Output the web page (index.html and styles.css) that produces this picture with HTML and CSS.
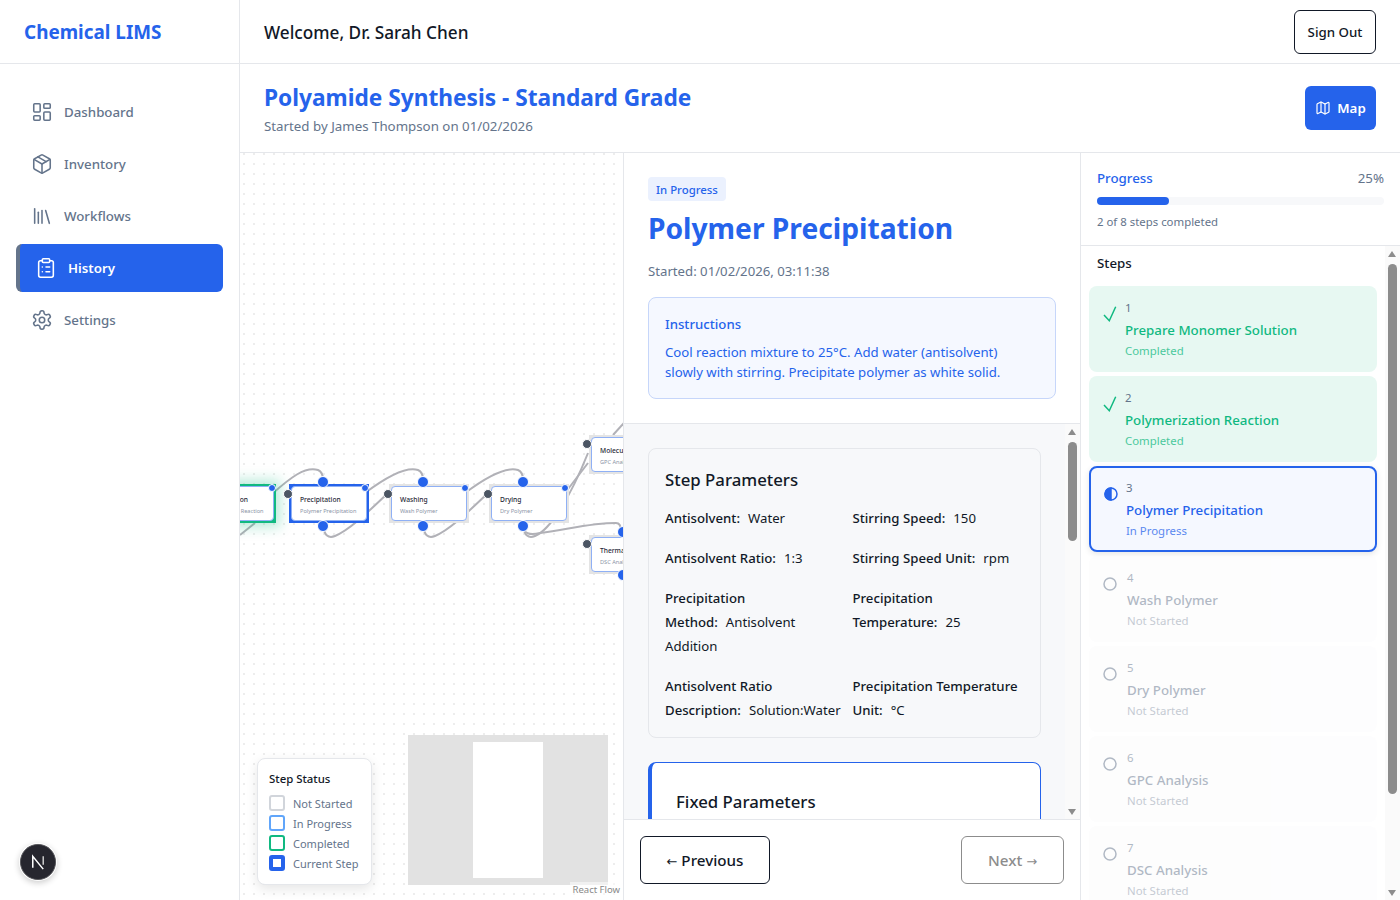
FILE: index.html
```html
<!DOCTYPE html>
<html lang="en">
<head>
    <meta charset="UTF-8">
    <title>Chemical LIMS</title>
    <link rel="stylesheet" href="styles.css">
</head>
<body>
    <div class="app">
        <aside class="sidebar">
            <div class="brand">Chemical LIMS</div>
            <nav class="nav">
                <a class="nav-item">
                    <svg class="nav-icon" viewBox="0 0 24 24"><rect x="3" y="3" width="7" height="9" rx="1"/><rect x="14" y="3" width="7" height="5" rx="1"/><rect x="14" y="12" width="7" height="9" rx="1"/><rect x="3" y="16" width="7" height="5" rx="1"/></svg>
                    Dashboard
                </a>
                <a class="nav-item">
                    <svg class="nav-icon" viewBox="0 0 24 24"><path d="M21 8a2 2 0 0 0-1-1.73l-7-4a2 2 0 0 0-2 0l-7 4A2 2 0 0 0 3 8v8a2 2 0 0 0 1 1.73l7 4a2 2 0 0 0 2 0l7-4A2 2 0 0 0 21 16Z"/><path d="m3.3 7 8.7 5 8.7-5"/><path d="M12 22V12"/><path d="m7.5 4.27 9 5.15"/></svg>
                    Inventory
                </a>
                <a class="nav-item">
                    <svg class="nav-icon" viewBox="0 0 24 24"><path d="m16 6 4 14"/><path d="M12 6v14"/><path d="M8 8v12"/><path d="M4 4v16"/></svg>
                    Workflows
                </a>
                <a class="nav-item active">
                    <svg class="nav-icon" viewBox="0 0 24 24"><rect x="8" y="2" width="8" height="4" rx="1"/><path d="M16 4h2a2 2 0 0 1 2 2v14a2 2 0 0 1-2 2H6a2 2 0 0 1-2-2V6a2 2 0 0 1 2-2h2"/><path d="M12 11h4"/><path d="M12 16h4"/><path d="M8 11h.01"/><path d="M8 16h.01"/></svg>
                    History
                </a>
                <a class="nav-item">
                    <svg class="nav-icon" viewBox="0 0 24 24"><path d="M12.22 2h-.44a2 2 0 0 0-2 2v.18a2 2 0 0 1-1 1.73l-.43.25a2 2 0 0 1-2 0l-.15-.08a2 2 0 0 0-2.73.73l-.22.38a2 2 0 0 0 .73 2.73l.15.1a2 2 0 0 1 1 1.72v.51a2 2 0 0 1-1 1.74l-.15.09a2 2 0 0 0-.73 2.73l.22.38a2 2 0 0 0 2.73.73l.15-.08a2 2 0 0 1 2 0l.43.25a2 2 0 0 1 1 1.73V20a2 2 0 0 0 2 2h.44a2 2 0 0 0 2-2v-.18a2 2 0 0 1 1-1.73l.43-.25a2 2 0 0 1 2 0l.15.08a2 2 0 0 0 2.73-.73l.22-.39a2 2 0 0 0-.73-2.73l-.15-.08a2 2 0 0 1-1-1.74v-.5a2 2 0 0 1 1-1.74l.15-.09a2 2 0 0 0 .73-2.73l-.22-.38a2 2 0 0 0-2.73-.73l-.15.08a2 2 0 0 1-2 0l-.43-.25a2 2 0 0 1-1-1.73V4a2 2 0 0 0-2-2z"/><circle cx="12" cy="12" r="3"/></svg>
                    Settings
                </a>
            </nav>
            <div class="dev-badge">
                <svg viewBox="0 0 40 40" width="38" height="38"><circle cx="20" cy="20" r="18.5" fill="#26262e" stroke="#55555a"/><path d="M14.5 26V14l11 13.5" fill="none" stroke="#fff" stroke-width="1.6"/><path d="M25.5 14v9" fill="none" stroke="#ccc" stroke-width="1.6"/></svg>
            </div>
        </aside>

        <div class="main">
            <header class="topbar">
                <div class="welcome">Welcome, Dr. Sarah Chen</div>
                <button class="btn-outline">Sign Out</button>
            </header>

            <div class="run-header">
                <div class="run-title">
                    <h1>Polyamide Synthesis - Standard Grade</h1>
                    <p>Started by James Thompson on 01/02/2026</p>
                </div>
                <button class="btn-map">
                    <svg viewBox="0 0 24 24"><path d="M14.106 5.553a2 2 0 0 0 1.788 0l3.659-1.83A1 1 0 0 1 21 4.619v12.764a1 1 0 0 1-.553.894l-4.553 2.277a2 2 0 0 1-1.788 0l-4.212-2.106a2 2 0 0 0-1.788 0l-3.659 1.83A1 1 0 0 1 3 19.381V6.618a1 1 0 0 1 .553-.894l4.553-2.277a2 2 0 0 1 1.788 0z"/><path d="M15 5.764v15"/><path d="M9 3.236v15"/></svg>
                    Map
                </button>
            </div>

            <div class="workspace">
                <section class="flow">
                    <svg class="edges" viewBox="0 0 384 747">
                        <path d="M32 341 C50 325 65 313 78 317 Q83 319 83 327"/>
                        <path d="M83 373 Q85 387 95 383 C110 377 130 357 148 340"/>
                        <path d="M125 340 C145 325 165 313 178 317 Q183 319 183 327"/>
                        <path d="M183 373 Q185 387 195 383 C210 377 230 357 248 340"/>
                        <path d="M225 340 C245 325 265 313 278 317 Q283 319 283 327"/>
                        <path d="M283 373 Q285 387 295 383 C310 377 330 345 348 300"/>
                        <path d="M283 373 Q284 384 300 380 C330 376 350 370 376 370 Q381 370 381 378"/>
                        <path d="M325 340 L348 310"/>
                        <path d="M373 282 L384 270"/>
                        <path d="M0 382 L15 370"/>
                    </svg>

                    <div class="node node-done" style="left:-44px;top:331px"><div class="node-body"><b>Polymerization</b><span>Polymerization Reaction</span></div></div>
                    <div class="node node-current" style="left:49px;top:331px"><div class="node-body"><b>Precipitation</b><span>Polymer Precipitation</span></div></div>
                    <div class="node" style="left:149px;top:331px"><div class="node-body"><b>Washing</b><span>Wash Polymer</span></div></div>
                    <div class="node" style="left:249px;top:331px"><div class="node-body"><b>Drying</b><span>Dry Polymer</span></div></div>
                    <div class="node" style="left:349px;top:282px"><div class="node-body"><b>Molecular</b><span>GPC Analysis</span></div></div>
                    <div class="node" style="left:349px;top:382px"><div class="node-body"><b>Thermal</b><span>DSC Analysis</span></div></div>

                    <i class="handle dark" style="left:43px;top:336px"></i>
                    <i class="handle dark" style="left:143px;top:336px"></i>
                    <i class="handle dark" style="left:243px;top:336px"></i>
                    <i class="handle dark" style="left:342px;top:286px"></i>
                    <i class="handle dark" style="left:342px;top:386px"></i>

                    <i class="handle small" style="left:28px;top:331px"></i>
                    <i class="handle small" style="left:121px;top:331px"></i>
                    <i class="handle small" style="left:221px;top:331px"></i>
                    <i class="handle small" style="left:321px;top:331px"></i>

                    <i class="handle big" style="left:77px;top:323px"></i>
                    <i class="handle big" style="left:77px;top:367px"></i>
                    <i class="handle big" style="left:177px;top:323px"></i>
                    <i class="handle big" style="left:177px;top:367px"></i>
                    <i class="handle big" style="left:277px;top:323px"></i>
                    <i class="handle big" style="left:277px;top:367px"></i>
                    <i class="handle big" style="left:377px;top:373px"></i>
                    <i class="handle big" style="left:377px;top:416px"></i>

                    <div class="legend">
                        <h4>Step Status</h4>
                        <div class="legend-row"><i class="swatch"></i>Not Started</div>
                        <div class="legend-row"><i class="swatch swatch-progress"></i>In Progress</div>
                        <div class="legend-row"><i class="swatch swatch-done"></i>Completed</div>
                        <div class="legend-row"><i class="swatch swatch-current"></i>Current Step</div>
                    </div>
                    <div class="minimap"><div class="minimap-view"></div></div>
                    <div class="attribution">React Flow</div>
                </section>

                <section class="detail">
                    <div class="detail-top">
                        <span class="badge">In Progress</span>
                        <h2>Polymer Precipitation</h2>
                        <div class="started">Started: 01/02/2026, 03:11:38</div>
                        <div class="instructions">
                            <h5>Instructions</h5>
                            <p>Cool reaction mixture to 25°C. Add water (antisolvent) slowly with stirring. Precipitate polymer as white solid.</p>
                        </div>
                    </div>
                    <div class="detail-scroll">
                        <div class="scroll-body">
                            <div class="card">
                                <h3>Step Parameters</h3>
                                <div class="params">
                                    <div><b>Antisolvent:</b>Water</div>
                                    <div><b>Stirring Speed:</b>150</div>
                                    <div><b>Antisolvent Ratio:</b>1:3</div>
                                    <div><b>Stirring Speed Unit:</b>rpm</div>
                                    <div><b>Precipitation Method:</b>Antisolvent Addition</div>
                                    <div><b>Precipitation Temperature:</b>25</div>
                                    <div><b>Antisolvent Ratio Description:</b>Solution:Water</div>
                                    <div><b>Precipitation Temperature Unit:</b>°C</div>
                                </div>
                            </div>
                            <div class="card card-fixed">
                                <h3>Fixed Parameters</h3>
                            </div>
                        </div>
                        <div class="scrollbar">
                            <i class="arrow up"></i>
                            <i class="thumb detail-thumb"></i>
                            <i class="arrow down"></i>
                        </div>
                    </div>
                    <div class="detail-footer">
                        <button class="btn-step"><span class="arr">←</span> Previous</button>
                        <button class="btn-step disabled">Next <span class="arr">→</span></button>
                    </div>
                </section>

                <aside class="steps-panel">
                    <div class="progress">
                        <div class="progress-head"><span class="progress-label">Progress</span><span class="progress-pct">25%</span></div>
                        <div class="progress-track"><div class="progress-fill" style="width:25%"></div></div>
                        <div class="progress-note">2 of 8 steps completed</div>
                    </div>
                    <div class="steps-scroll">
                        <div class="steps-body">
                            <h4>Steps</h4>
                            <div class="step done">
                                <svg class="step-icon" viewBox="0 0 14 16"><path d="M1 9 6.3 14.7 12.7.7"/></svg>
                                <div><div class="step-num">1</div><div class="step-name">Prepare Monomer Solution</div><div class="step-status">Completed</div></div>
                            </div>
                            <div class="step done">
                                <svg class="step-icon" viewBox="0 0 14 16"><path d="M1 9 6.3 14.7 12.7.7"/></svg>
                                <div><div class="step-num">2</div><div class="step-name">Polymerization Reaction</div><div class="step-status">Completed</div></div>
                            </div>
                            <div class="step current">
                                <svg class="step-icon" viewBox="0 0 14 16"><circle cx="7" cy="8" r="6"/><path class="half" d="M7 2a6 6 0 0 0 0 12z"/></svg>
                                <div><div class="step-num">3</div><div class="step-name">Polymer Precipitation</div><div class="step-status">In Progress</div></div>
                            </div>
                            <div class="step idle">
                                <svg class="step-icon" viewBox="0 0 14 16"><circle cx="7" cy="8" r="6"/></svg>
                                <div><div class="step-num">4</div><div class="step-name">Wash Polymer</div><div class="step-status">Not Started</div></div>
                            </div>
                            <div class="step idle">
                                <svg class="step-icon" viewBox="0 0 14 16"><circle cx="7" cy="8" r="6"/></svg>
                                <div><div class="step-num">5</div><div class="step-name">Dry Polymer</div><div class="step-status">Not Started</div></div>
                            </div>
                            <div class="step idle">
                                <svg class="step-icon" viewBox="0 0 14 16"><circle cx="7" cy="8" r="6"/></svg>
                                <div><div class="step-num">6</div><div class="step-name">GPC Analysis</div><div class="step-status">Not Started</div></div>
                            </div>
                            <div class="step idle">
                                <svg class="step-icon" viewBox="0 0 14 16"><circle cx="7" cy="8" r="6"/></svg>
                                <div><div class="step-num">7</div><div class="step-name">DSC Analysis</div><div class="step-status">Not Started</div></div>
                            </div>
                        </div>
                        <div class="scrollbar">
                            <i class="arrow up"></i>
                            <i class="thumb steps-thumb"></i>
                            <i class="arrow down"></i>
                        </div>
                    </div>
                </aside>
            </div>
        </div>
    </div>
</body>
</html>
```

FILE: styles.css
```css
* {
    box-sizing: border-box;
}
html, body {
    height: 100%;
    margin: 0;
    overflow: hidden;
}
body {
    font-family: "Noto Sans", "Open Sans", sans-serif;
    color: #111827;
    background-color: #fff;
}
h1, h2, h3, h4, h5, p {
    margin: 0;
}
button {
    font-family: inherit;
    background: #fff;
    cursor: pointer;
}
.app {
    display: flex;
    height: 900px;
}

/* sidebar */
.sidebar {
    width: 240px;
    flex: none;
    border-right: 1px solid #e5e7eb;
    display: flex;
    flex-direction: column;
    position: relative;
}
.brand {
    height: 64px;
    padding: 1px 0 0 24px;
    display: flex;
    align-items: center;
    font-size: 18.9px;
    font-weight: 700;
    color: #2563eb;
    border-bottom: 1px solid #e5e7eb;
}
.nav {
    padding: 24px 16px;
    display: flex;
    flex-direction: column;
    gap: 4px;
}
.nav-item {
    height: 48px;
    display: flex;
    align-items: center;
    gap: 11px;
    padding-left: 15px;
    border-radius: 6px;
    font-size: 13.3px;
    font-weight: 500;
    color: #64748b;
}
.nav-item.active {
    background-color: #2563eb;
    color: #fff;
    font-weight: 600;
    border-left: 4px solid #64748b;
}
.nav-icon {
    width: 22px;
    height: 22px;
    fill: none;
    stroke: currentColor;
    stroke-width: 1.7;
    stroke-linecap: round;
    stroke-linejoin: round;
}
.dev-badge {
    position: absolute;
    left: 19px;
    top: 843px;
    width: 38px;
    height: 38px;
    border-radius: 50%;
    box-shadow: 0 2px 6px rgba(0,0,0,0.2);
}
.dev-badge svg {
    display: block;
}

/* top */
.main {
    flex: 1;
    min-width: 0;
    display: flex;
    flex-direction: column;
}
.topbar {
    height: 64px;
    flex: none;
    display: flex;
    align-items: center;
    justify-content: space-between;
    padding: 0 24px;
    border-bottom: 1px solid #e5e7eb;
}
.welcome {
    padding-top: 2px;
    font-size: 17.2px;
    font-weight: 500;
}
.btn-outline {
    width: 82px;
    height: 44px;
    border: 1px solid #111827;
    border-radius: 6px;
    font-size: 13.3px;
    font-weight: 500;
    color: #111827;
}
.run-header {
    height: 89px;
    flex: none;
    display: flex;
    align-items: center;
    justify-content: space-between;
    padding: 0 24px;
    border-bottom: 1px solid #e5e7eb;
}
.run-title {
    padding-top: 3px;
}
.run-header h1 {
    font-size: 22.7px;
    line-height: 32px;
    font-weight: 700;
    color: #2563eb;
}
.run-header p {
    font-size: 13.3px;
    line-height: 24px;
    color: #64748b;
}
.btn-map {
    width: 71px;
    height: 44px;
    border: none;
    border-radius: 6px;
    background-color: #2563eb;
    color: #fff;
    font-size: 13.3px;
    font-weight: 600;
    display: flex;
    align-items: center;
    justify-content: center;
    gap: 6px;
}
.btn-map svg {
    width: 16px;
    height: 16px;
    fill: none;
    stroke: currentColor;
    stroke-width: 1.8;
    stroke-linecap: round;
    stroke-linejoin: round;
}
.workspace {
    flex: 1;
    min-height: 0;
    display: flex;
}

/* flow canvas */
.flow {
    width: 384px;
    flex: none;
    position: relative;
    overflow: hidden;
    border-right: 1px solid #e5e7eb;
    background-color: #fff;
    background-image: radial-gradient(#ededed 0.8px, transparent 0.9px);
    background-size: 10px 10px;
    background-position: -1px -4px;
}
.edges {
    position: absolute;
    left: 0;
    top: 0;
    width: 384px;
    height: 747px;
    fill: none;
    stroke: #b1b1b7;
    stroke-width: 2;
}
.node {
    position: absolute;
    width: 80px;
    height: 39px;
    padding: 2px;
    background-color: #e4e4e4;
}
.node-body {
    height: 100%;
    padding: 8px 0 0 8px;
    background-color: #fff;
    border: 1px solid #8fb0f5;
    border-radius: 4px;
    white-space: nowrap;
    overflow: hidden;
}
.node b {
    display: block;
    font-size: 6.7px;
    line-height: 10px;
    font-weight: 500;
    color: #1f2937;
}
.node span {
    display: block;
    font-size: 5.6px;
    line-height: 13px;
    color: #8a94a6;
}
.node-done {
    background-color: #10b981;
    box-shadow: 0 0 12px 4px rgba(16,185,129,0.3);
}
.node-done .node-body {
    padding-left: 1px;
}
.node-current {
    background-color: #2563eb;
}
.handle {
    position: absolute;
    display: block;
    border-radius: 50%;
    background-color: #2563eb;
    border: 1px solid #fff;
}
.handle.dark {
    width: 10px;
    height: 10px;
    background-color: #4b5563;
}
.handle.small {
    width: 8px;
    height: 8px;
}
.handle.big {
    width: 12px;
    height: 12px;
}
.legend {
    position: absolute;
    left: 17px;
    top: 605px;
    width: 115px;
    height: 127px;
    padding: 12px 11px;
    background-color: #fff;
    border: 1px solid #e5e7eb;
    border-radius: 8px;
    box-shadow: 0 4px 12px rgba(0,0,0,0.1);
}
.legend h4 {
    font-size: 11.4px;
    line-height: 16px;
    font-weight: 500;
    margin-bottom: 6px;
}
.legend-row {
    display: flex;
    align-items: center;
    gap: 8px;
    height: 20px;
    font-size: 11px;
    color: #64748b;
    white-space: nowrap;
}
.swatch {
    width: 16px;
    height: 16px;
    border: 2px solid #d1d5db;
    border-radius: 3px;
    flex: none;
}
.swatch-progress {
    border-color: #60a5fa;
}
.swatch-done {
    border-color: #10b981;
}
.swatch-current {
    border: 4px solid #2563eb;
}
.minimap {
    position: absolute;
    left: 168px;
    top: 582px;
    width: 200px;
    height: 150px;
    background-color: #e2e2e2;
}
.minimap-view {
    position: absolute;
    left: 65px;
    top: 7px;
    width: 70px;
    height: 136px;
    background-color: #fff;
}
.attribution {
    position: absolute;
    right: 0;
    bottom: 2px;
    padding: 2px 3px;
    font-size: 9.5px;
    line-height: 12px;
    color: #888;
    background-color: rgba(255,255,255,0.5);
}

/* detail column */
.detail {
    width: 457px;
    flex: none;
    display: flex;
    flex-direction: column;
    border-right: 1px solid #e5e7eb;
}
.detail-top {
    height: 271px;
    flex: none;
    padding: 24px;
    border-bottom: 1px solid #e5e7eb;
}
.badge {
    display: block;
    width: fit-content;
    height: 24px;
    padding: 0 8px;
    background-color: #ebf1fe;
    border-radius: 4px;
    font-size: 11.4px;
    line-height: 25px;
    font-weight: 500;
    color: #2563eb;
}
.detail-top h2 {
    font-size: 28.2px;
    line-height: 36px;
    font-weight: 700;
    color: #2563eb;
    margin-top: 9px;
}
.started {
    font-size: 13.2px;
    line-height: 20px;
    color: #64748b;
    margin-top: 15px;
}
.instructions {
    margin-top: 16px;
    height: 102px;
    padding: 16px;
    background-color: #f5f8ff;
    border: 1px solid #c6d6fa;
    border-radius: 8px;
    color: #2563eb;
}
.instructions h5 {
    font-size: 13.2px;
    line-height: 20px;
    font-weight: 500;
}
.instructions p {
    max-width: 350px;
    font-size: 13.2px;
    line-height: 20px;
    margin-top: 8px;
}
.detail-scroll {
    flex: 1;
    min-height: 0;
    display: flex;
    background-color: #f7f8fa;
    overflow: hidden;
}
.scroll-body {
    flex: 1;
    min-width: 0;
    padding: 24px 24px 0;
    overflow: hidden;
}
.card {
    background-color: #f7f8fa;
    border: 1px solid #e5e7eb;
    border-radius: 8px;
    padding: 17px 16px 15px;
    margin-bottom: 24px;
}
.card h3 {
    font-size: 16.8px;
    line-height: 28px;
    font-weight: 500;
    margin-bottom: 12px;
}
.params {
    display: grid;
    grid-template-columns: 172px 172px;
    column-gap: 15.5px;
    row-gap: 16px;
    font-size: 13.2px;
    line-height: 24px;
}
.params b {
    font-weight: 500;
    margin-right: 8px;
}
.card-fixed {
    background-color: #fff;
    border: 1px solid #2563eb;
    border-left-width: 4px;
    padding: 25px 24px;
    height: 200px;
}
.scrollbar {
    width: 15px;
    flex: none;
    position: relative;
    background-color: #fafafa;
}
.thumb {
    position: absolute;
    left: 3px;
    width: 9px;
    border-radius: 5px;
    background-color: #8c8c8c;
}
.detail-thumb {
    top: 18px;
    height: 99px;
}
.steps-thumb {
    top: 18px;
    height: 530px;
}
.arrow {
    position: absolute;
    left: 3px;
    width: 0;
    height: 0;
    border-left: 4.5px solid transparent;
    border-right: 4.5px solid transparent;
}
.arrow.up {
    top: 5px;
    border-bottom: 6px solid #8c8c8c;
}
.arrow.down {
    bottom: 4px;
    border-top: 6px solid #8c8c8c;
}
.detail-footer {
    height: 81px;
    flex: none;
    display: flex;
    align-items: flex-start;
    justify-content: space-between;
    padding: 16px;
    border-top: 1px solid #e5e7eb;
}
.btn-step {
    height: 48px;
    width: 130px;
    border: 1px solid #111827;
    border-radius: 6px;
    font-size: 15.2px;
    font-weight: 500;
    color: #111827;
}
.btn-step.disabled {
    width: 103px;
    border-color: #8c8c8c;
    color: #8c8c8c;
}
.arr {
    font-family: "DejaVu Sans", sans-serif;
    font-size: 13px;
    font-weight: 400;
}

/* steps */
.steps-panel {
    flex: 1;
    min-width: 0;
    display: flex;
    flex-direction: column;
}
.progress {
    height: 93px;
    flex: none;
    padding: 15px 16px;
    border-bottom: 1px solid #e5e7eb;
}
.progress-head {
    display: flex;
    justify-content: space-between;
    font-size: 13.3px;
    line-height: 20px;
}
.progress-label {
    font-weight: 500;
    color: #2563eb;
}
.progress-pct {
    color: #64748b;
}
.progress-track {
    height: 8px;
    margin-top: 9px;
    background-color: #f7f8fa;
    border-radius: 4px;
}
.progress-fill {
    height: 8px;
    background-color: #2563eb;
    border-radius: 4px;
}
.progress-note {
    font-size: 11.4px;
    line-height: 16px;
    margin-top: 9px;
    color: #64748b;
}
.steps-scroll {
    flex: 1;
    min-height: 0;
    display: flex;
    overflow: hidden;
}
.steps-body {
    flex: 1;
    min-width: 0;
    padding: 7px 8px 0;
    overflow: hidden;
}
.steps-body h4 {
    font-size: 13.3px;
    line-height: 20px;
    font-weight: 500;
    padding-left: 8px;
    margin-bottom: 13px;
}
.step {
    height: 86px;
    margin-bottom: 4px;
    padding: 12px 14px;
    border-radius: 8px;
    display: flex;
    gap: 8px;
}
.step-icon {
    width: 14px;
    height: 16px;
    margin-top: 8px;
    flex: none;
    fill: none;
    stroke: currentColor;
    stroke-width: 1.5;
}
.step-num {
    font-size: 11.4px;
    line-height: 20px;
    color: #64748b;
}
.step-name {
    font-size: 13.3px;
    line-height: 24px;
    font-weight: 500;
}
.step-status {
    font-size: 11.4px;
    line-height: 18px;
    opacity: 0.75;
}
.step.done {
    background-color: #e7f8f2;
    color: #10b981;
}
.step.current {
    background-color: #f5f8ff;
    border: 2px solid #2563eb;
    color: #2563eb;
    box-shadow: 0 2px 6px rgba(0,0,0,0.1);
    padding: 10px 13px;
}
.half {
    fill: currentColor;
}
.step.idle {
    background-color: #fcfcfd;
    color: #64748b;
    opacity: 0.5;
    gap: 10px;
}
```
